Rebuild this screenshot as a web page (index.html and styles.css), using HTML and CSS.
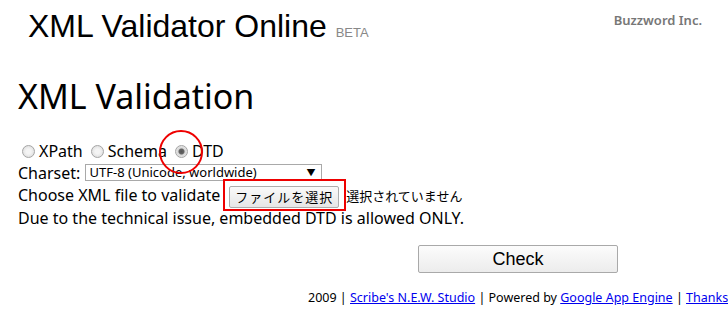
FILE: index.html
```html
<!DOCTYPE html>
<html lang="en">
  <head>
    <title>XML Validator Online</title>
    <meta charset="utf-8">
    <link rel="stylesheet" href="styles.css">
  </head>
  <body>
    <div class="header">
      <h1 class="site-title">XML Validator Online <span class="beta">BETA</span></h1>
      <div class="company">Buzzword Inc.</div>
    </div>

    <h2 class="page-title">XML Validation</h2>

    <form class="validator">
      <div class="modes">
        <label><input type="radio" name="mode" value="xpath">XPath</label>
        <label><input type="radio" name="mode" value="schema">Schema</label>
        <label class="marked"><input type="radio" name="mode" value="dtd" checked>DTD<span class="ring"></span></label>
      </div>
      <div class="row">
        <label for="charset">Charset:</label>
        <span class="select-wrap">
          <select id="charset" class="charset">
            <option>UTF-8 (Unicode, worldwide)</option>
          </select>
          <span class="arrow">▼</span>
        </span>
      </div>
      <div class="row">
        Choose XML file to validate<span class="file-box"><span class="file-btn">ファイルを選択</span></span><span class="file-none">選択されていません</span>
      </div>
      <div class="row">Due to the technical issue, embedded DTD is allowed ONLY.</div>
      <div class="submit">
        <button type="button" class="check">Check</button>
      </div>
    </form>

    <div class="footer">
      2009 | <a href="#">Scribe's N.E.W. Studio</a> | Powered by <a href="#">Google App Engine</a> | <a href="#">Thanks</a>
    </div>
  </body>
</html>
```

FILE: styles.css
```css
body {
  margin: 0;
  background: #fff;
  color: #000;
  font-family: "Noto Sans", "Noto Sans CJK JP", sans-serif;
  font-size: 16px;
  overflow: hidden;
  width: 728px;
  height: 320px;
}

.header {
  display: flex;
  justify-content: space-between;
  align-items: flex-start;
  height: 60px;
}
.site-title {
  margin: 8px 0 0 28px;
  font-family: "Liberation Sans", Arial, sans-serif;
  font-weight: normal;
  font-size: 32px;
  line-height: 36px;
}
.beta {
  font-size: 13px;
  color: #888;
}
.company {
  margin: 11px 26px 0 0;
  font-size: 13px;
  font-weight: 600;
  color: #777;
}

.page-title {
  margin: 14px 0 0 18px;
  font-size: 34px;
  font-weight: normal;
  line-height: 44px;
}

.validator {
  margin: 22px 0 0 18px;
  line-height: 22px;
}
.modes {
  display: flex;
  align-items: center;
  gap: 8px;
}
.modes label {
  display: flex;
  align-items: center;
  position: relative;
}
.modes input {
  appearance: none;
  -webkit-appearance: none;
  margin: 1px 4px 0 4px;
  width: 13px;
  height: 13px;
  border: 1px solid #a5a5a5;
  border-radius: 50%;
  background: radial-gradient(circle, #f4f4f4 30%, #d6d6d6 100%);
}
.modes label + label input {
  margin-left: 0;
}
.modes input:checked {
  background: radial-gradient(circle, #555 0, #666 2.5px, #d8d8d8 3.5px, #f2f2f2 100%);
}
.ring {
  position: absolute;
  z-index: 2;
  left: -16px;
  top: -10px;
  width: 40px;
  height: 40px;
  border: 2px solid #e00;
  border-radius: 50%;
}
.row {
  white-space: nowrap;
}
.select-wrap {
  display: inline-block;
  position: relative;
  vertical-align: top;
  margin-top: 2px;
}
.charset {
  appearance: none;
  -webkit-appearance: none;
  display: block;
  font-family: "Noto Sans", sans-serif;
  font-size: 13px;
  line-height: 15px;
  width: 237px;
  height: 17px;
  padding: 0 0 0 4px;
  border: 1px solid #a9a9a9;
  border-radius: 0;
  background: #fff;
  color: #000;
}
.arrow {
  position: absolute;
  right: 6px;
  top: 0;
  font-size: 9px;
  line-height: 17px;
  pointer-events: none;
}
.file-box {
  display: inline-block;
  position: relative;
  z-index: 2;
  border: 2px solid #e00;
  padding: 5px 5px 1px 4px;
  margin: -5px 0 -5px 3px;
  vertical-align: top;
  line-height: 20px;
}
.file-btn {
  display: block;
  font-size: 13px;
  line-height: 20px;
  padding: 0 5px;
  border: 1px solid #adadad;
  border-radius: 2px;
  background: linear-gradient(#fafafa, #e6e6e6);
  letter-spacing: 1px;
}
.file-none {
  font-size: 13px;
}
.submit {
  display: flex;
  padding: 16px 0 0 400px;
}
.check {
  width: 200px;
  height: 28px;
  font-family: "Liberation Sans", Arial, sans-serif;
  font-size: 18px;
  border: 1px solid #a9a9a9;
  border-radius: 2px;
  background: linear-gradient(#fcfcfc, #ececec);
}
.footer {
  margin: 16px 0 0 308px;
  font-size: 12.5px;
  white-space: nowrap;
}
.footer a {
  color: #00e;
}
```
